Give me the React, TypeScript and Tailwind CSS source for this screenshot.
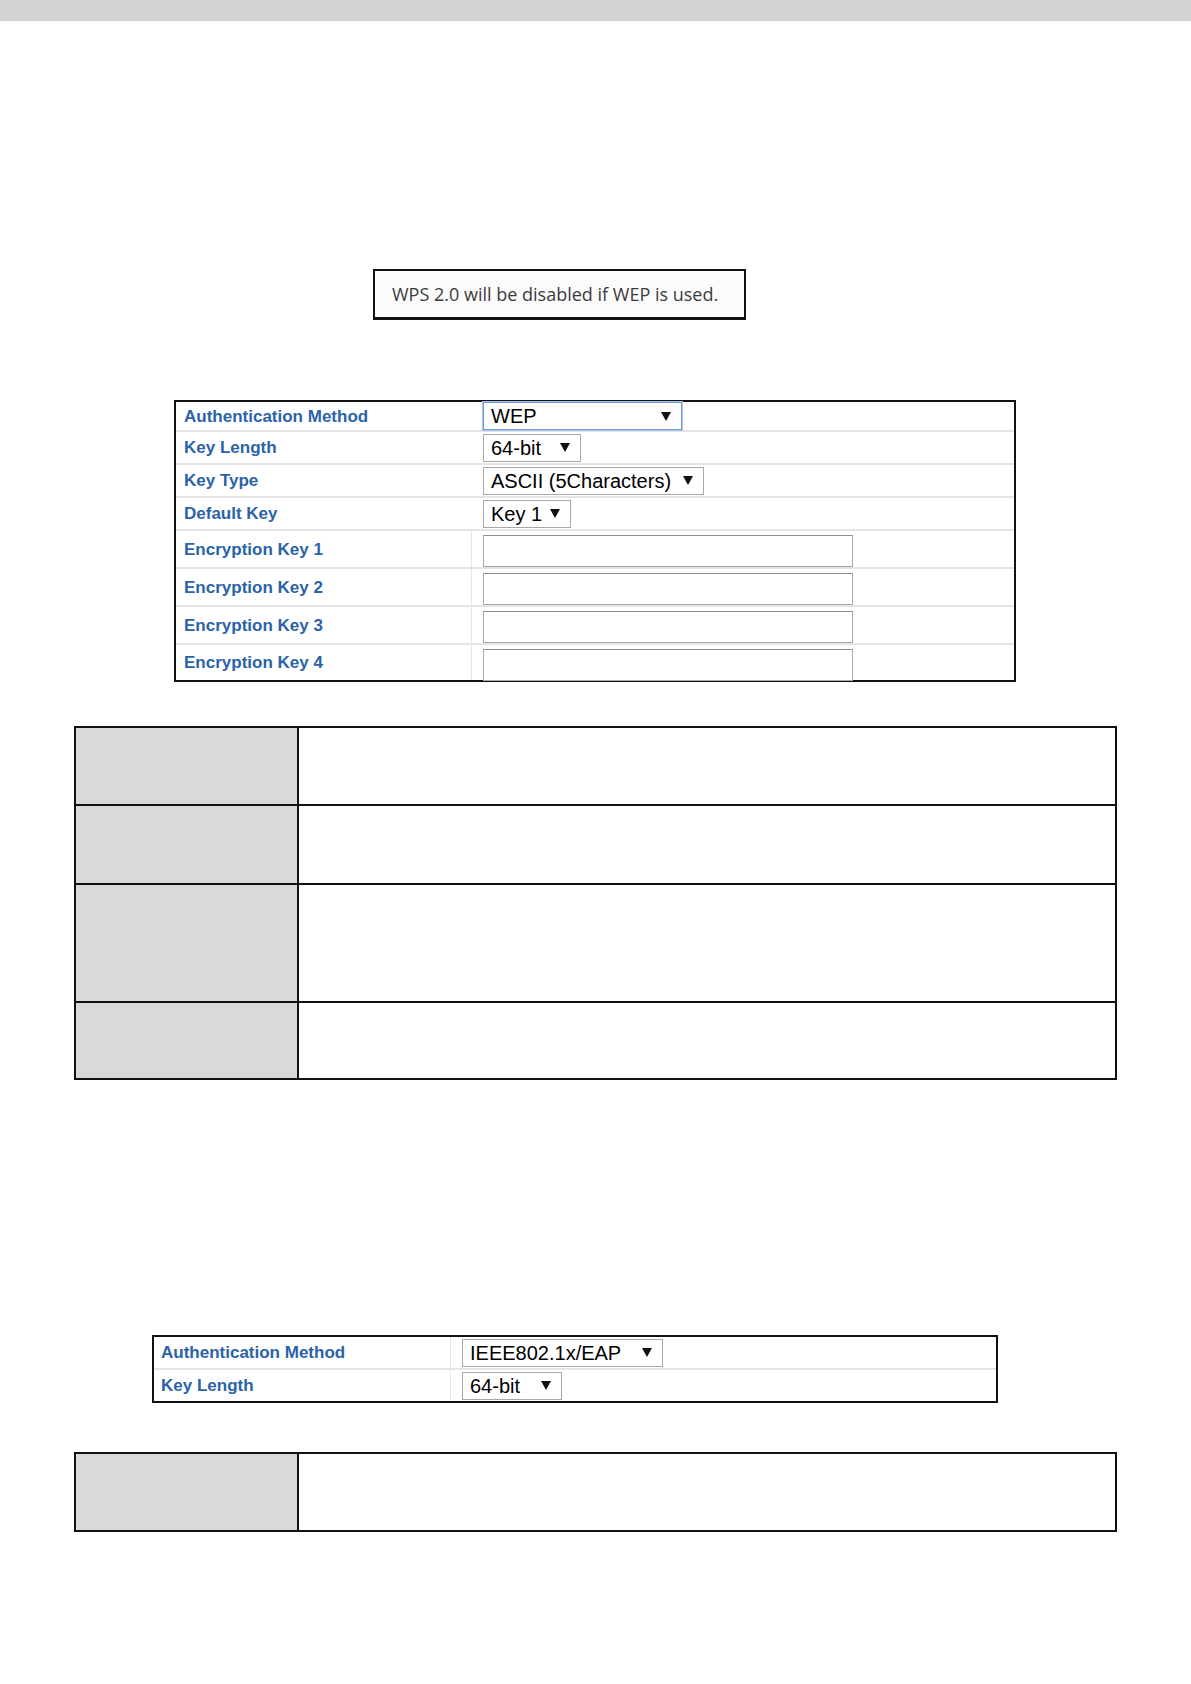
import type { ReactNode } from 'react'

const labelCls = "font-['Liberation_Sans',Arial,sans-serif] font-bold text-[17px] text-[#2b63a9] leading-none"

function Arrow() {
    return (
        <svg width="10" height="9" viewBox="0 0 10 9" className="shrink-0">
            <path d="M0 0H10L5 9Z" fill="#111" />
        </svg>
    )
}

interface SelectBoxProps {
    value: string
    className?: string
    focused?: boolean
}

function SelectBox({ value, className = '', focused = false }: SelectBoxProps) {
    return (
        <div
            className={`flex items-center justify-between h-[28px] pl-[7px] pr-[10px] bg-white border ${
                focused ? 'border-[#6f9bd6] shadow-[0_0_0_1px_#a9c4ea]' : 'border-[#a8a8a8]'
            } font-['Liberation_Sans',Arial,sans-serif] text-[20px] text-black leading-none ${className}`}
        >
            <span>{value}</span>
            <Arrow />
        </div>
    )
}

function TextBox() {
    return <div className="w-[370px] h-[32px] bg-white border border-[#a9a9a9] border-t-[#8f8f8f]" />
}

interface FormRowProps {
    label: string
    children: ReactNode
    className?: string
    divider?: boolean
    top?: boolean
}

function FormRow({ label, children, className = '', divider = false, top = false }: FormRowProps) {
    return (
        <div className={`flex ${className}`}>
            <div
                className={`w-[296px] shrink-0 flex items-center pl-[8px] ${
                    divider ? 'border-r border-[#e6e6e6]' : ''
                }`}
            >
                <span className={labelCls}>{label}</span>
            </div>
            <div className={`flex pl-[11px] ${top ? 'items-start pt-[4px]' : 'items-center'}`}>{children}</div>
        </div>
    )
}

function DescTable({ heights }: { heights: string[] }) {
    return (
        <div className="ml-[74px] w-[1043px] border-2 border-[#111] flex flex-col">
            {heights.map((h, i) => (
                <div
                    key={i}
                    className={`flex ${h} ${i < heights.length - 1 ? 'border-b-2 border-[#111]' : ''}`}
                >
                    <div className="w-[223px] shrink-0 bg-[#d9d9d9] border-r-2 border-[#111]" />
                    <div className="flex-1 bg-white" />
                </div>
            ))}
        </div>
    )
}

export default function App() {
    return (
        <div className="w-[1191px] min-h-[1684px] bg-white flex flex-col">
            {/* page header strip */}
            <div className="h-[21px] bg-[#d3d3d3]" />

            {/* WPS warning */}
            <div className="mt-[248px] ml-[373px] w-[373px] h-[51px] flex items-center pl-[17px] bg-[#fbfbfb] border-t-2 border-l-2 border-r-2 border-b-[3px] border-[#111]">
                <span className="font-['Open_Sans',sans-serif] text-[18px] text-[#3b3b3b] leading-none">
                    WPS 2.0 will be disabled if WEP is used.
                </span>
            </div>

            {/* WEP settings */}
            <div className="mt-[80px] ml-[174px] w-[842px] border-2 border-[#111] bg-white flex flex-col">
                <FormRow label="Authentication Method" className="h-[30px] border-b-2 border-[#e4e4e4]">
                    <SelectBox value="WEP" focused className="w-[199px]" />
                </FormRow>
                <FormRow label="Key Length" className="h-[33px] border-b-2 border-[#e4e4e4]">
                    <SelectBox value="64-bit" className="w-[98px]" />
                </FormRow>
                <FormRow label="Key Type" className="h-[33px] border-b-2 border-[#e4e4e4]">
                    <SelectBox value="ASCII (5Characters)" className="w-[221px]" />
                </FormRow>
                <FormRow label="Default Key" className="h-[33px] border-b-2 border-[#e4e4e4]">
                    <SelectBox value="Key 1" className="w-[88px]" />
                </FormRow>
                <FormRow label="Encryption Key 1" divider top className="h-[38px] border-b-2 border-[#e4e4e4]">
                    <TextBox />
                </FormRow>
                <FormRow label="Encryption Key 2" divider top className="h-[38px] border-b-2 border-[#e4e4e4]">
                    <TextBox />
                </FormRow>
                <FormRow label="Encryption Key 3" divider top className="h-[38px] border-b-2 border-[#e4e4e4]">
                    <TextBox />
                </FormRow>
                <FormRow label="Encryption Key 4" divider top className="h-[35px]">
                    <TextBox />
                </FormRow>
            </div>

            <div className="mt-[44px]">
                <DescTable heights={['h-[78px]', 'h-[79px]', 'h-[118px]', 'h-[75px]']} />
            </div>

            {/* 802.1x settings */}
            <div className="mt-[255px] ml-[152px] w-[846px] border-2 border-[#111] bg-white flex flex-col">
                <div className="flex h-[33px] border-b-2 border-[#e4e4e4]">
                    <div className="w-[297px] shrink-0 flex items-center pl-[7px] border-r border-[#e6e6e6]">
                        <span className={labelCls}>Authentication Method</span>
                    </div>
                    <div className="flex items-center pl-[11px]">
                        <SelectBox value="IEEE802.1x/EAP" className="w-[201px]" />
                    </div>
                </div>
                <div className="flex h-[31px]">
                    <div className="w-[297px] shrink-0 flex items-center pl-[7px] border-r border-[#e6e6e6]">
                        <span className={labelCls}>Key Length</span>
                    </div>
                    <div className="flex items-center pl-[11px]">
                        <SelectBox value="64-bit" className="w-[100px]" />
                    </div>
                </div>
            </div>

            <div className="mt-[49px]">
                <DescTable heights={['h-[76px]']} />
            </div>
        </div>
    )
}
